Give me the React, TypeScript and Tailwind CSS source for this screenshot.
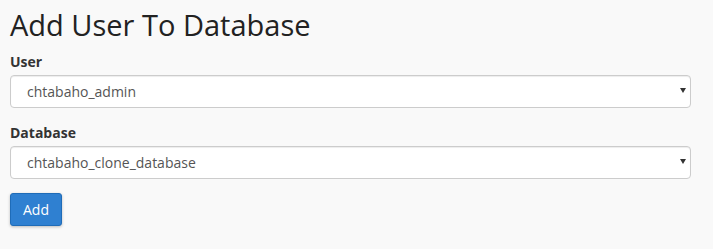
export default function App() {
  return (
    <div className="min-h-[249px] bg-[#f9f9f9] px-[10px] pt-[6px] font-['Open_Sans',sans-serif]">
      <h1 className="text-[29px] leading-[38px] text-[#222]">Add User To Database</h1>
      <form className="mt-[8px] w-[681px]">
        <div className="mb-[15px]">
          <label className="block text-[14px] font-bold leading-[19px] text-[#333]">User</label>
          <div className="relative mt-[4px]">
            <select className="h-[33px] w-full appearance-none rounded-[4px] border border-[#ccc] bg-white pl-[16px] text-[14px] text-[#555] shadow-[inset_0_1px_1px_rgba(0,0,0,0.075)]">
              <option>chtabaho_admin</option>
            </select>
            <span className="pointer-events-none absolute right-[5px] top-[13px] border-x-[3.5px] border-t-[5px] border-x-transparent border-t-[#333]" />
          </div>
        </div>
        <div className="mb-[14px]">
          <label className="block text-[14px] font-bold leading-[19px] text-[#333]">Database</label>
          <div className="relative mt-[4px]">
            <select className="h-[33px] w-full appearance-none rounded-[4px] border border-[#ccc] bg-white pl-[16px] text-[14px] text-[#555] shadow-[inset_0_1px_1px_rgba(0,0,0,0.075)]">
              <option>chtabaho_clone_database</option>
            </select>
            <span className="pointer-events-none absolute right-[5px] top-[13px] border-x-[3.5px] border-t-[5px] border-x-transparent border-t-[#333]" />
          </div>
        </div>
        <button type="button" className="h-[33px] rounded-[3px] border border-[#1f6cb8] bg-[#2f80d1] px-[12px] text-[14px] text-white shadow-[0_1px_3px_rgba(0,0,0,0.25)]">
          Add
        </button>
      </form>
    </div>
  );
}
